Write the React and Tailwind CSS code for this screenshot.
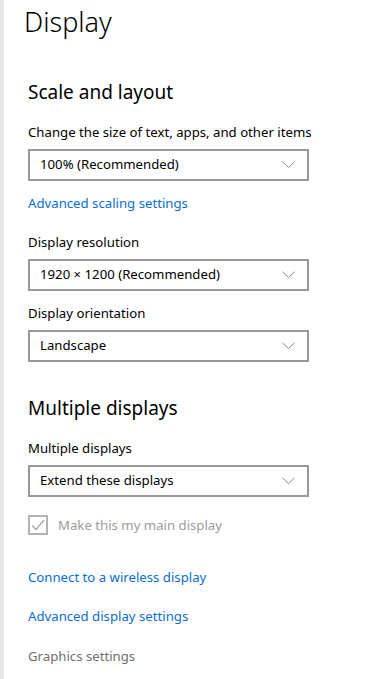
import React from "react";

const font = { fontFamily: '"Noto Sans", "Open Sans", sans-serif' };

function Chevron() {
  return (
    <svg width="13" height="8" viewBox="0 0 13 8" className="shrink-0">
      <path d="M0.5 0.8 L6.5 6.6 L12.5 0.8" fill="none" stroke="#8a8a8a" strokeWidth="1" />
    </svg>
  );
}

function Select({ value }) {
  return (
    <div className="flex h-[32px] w-[281px] items-center justify-between border-2 border-[#999999] bg-white pl-[10px] pr-[12px]">
      <span className="text-[13.2px] leading-none text-black">{value}</span>
      <Chevron />
    </div>
  );
}

export default function App() {
  return (
    <div className="flex min-h-[679px] w-[384px] bg-white" style={font}>
      <div className="w-[4px] shrink-0 bg-[#e6e6e6]" />
      <div className="flex flex-1 flex-col pl-[24px]">
        <h1 className="mt-[3px] -ml-[4px] h-[38px] text-[27px] font-light leading-[38px] text-black">Display</h1>
        <h2 className="mt-[38px] h-[26px] text-[19px] leading-[26px] text-black">Scale and layout</h2>
        <div className="mt-[17px] h-[20px] text-[13.2px] leading-[20px] text-black">Change the size of text, apps, and other items</div>
        <div className="mt-[7px]"><Select value="100% (Recommended)" /></div>
        <div className="mt-[12px] h-[20px] text-[13.2px] leading-[20px] text-[#0a6ed1]">Advanced scaling settings</div>
        <div className="mt-[19px] h-[20px] text-[13.2px] leading-[20px] text-black">Display resolution</div>
        <div className="mt-[7px]"><Select value="1920 × 1200 (Recommended)" /></div>
        <div className="mt-[12px] h-[20px] text-[13.2px] leading-[20px] text-black">Display orientation</div>
        <div className="mt-[7px]"><Select value="Landscape" /></div>
        <h2 className="mt-[33px] h-[26px] text-[19px] leading-[26px] text-black">Multiple displays</h2>
        <div className="mt-[17px] h-[20px] text-[13.2px] leading-[20px] text-black">Multiple displays</div>
        <div className="mt-[7px]"><Select value="Extend these displays" /></div>
        <div className="mt-[18px] flex h-[20px] items-center gap-[10px]">
          <div className="flex h-[20px] w-[20px] items-center justify-center border-2 border-[#b3b3b3]">
            <svg width="14" height="12" viewBox="0 0 14 12">
              <path d="M1 6.5 L5 10.5 L13 1" fill="none" stroke="#a6a6a6" strokeWidth="1.2" />
            </svg>
          </div>
          <span className="text-[13.2px] leading-[20px] text-[#9c9c9c]">Make this my main display</span>
        </div>
        <div className="mt-[32px] h-[20px] text-[13.2px] leading-[20px] text-[#0a6ed1]">Connect to a wireless display</div>
        <div className="mt-[19px] h-[20px] text-[13.2px] leading-[20px] text-[#0a6ed1]">Advanced display settings</div>
        <div className="mt-[20px] h-[20px] text-[13.2px] leading-[20px] text-[#6e6e6e]">Graphics settings</div>
      </div>
    </div>
  );
}
